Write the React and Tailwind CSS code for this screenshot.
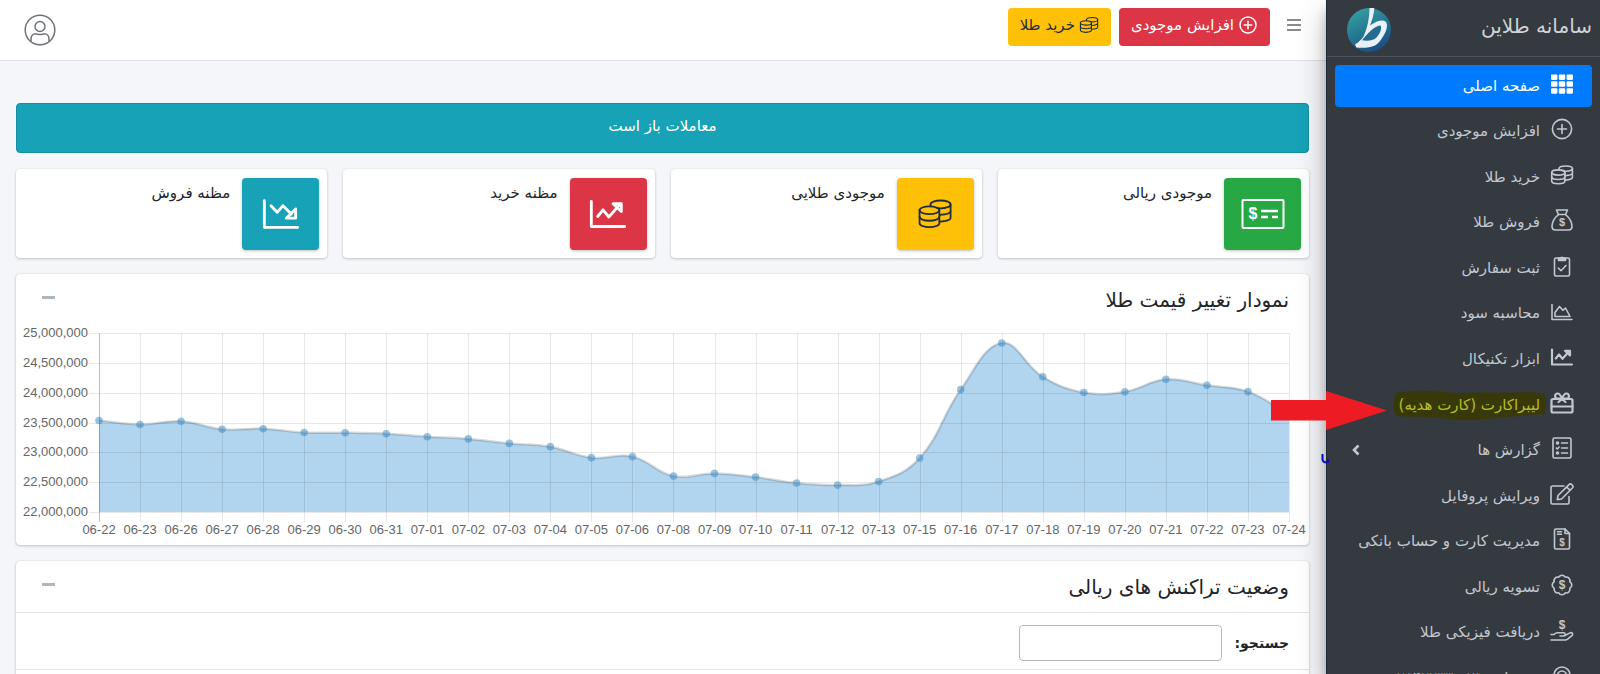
import React from 'react'
import { FaTh } from 'react-icons/fa'

const prices = [
  ['06-22', 23533], ['06-23', 23466], ['06-26', 23521], ['06-27', 23387], ['06-28', 23396],
  ['06-29', 23332], ['06-30', 23329], ['06-31', 23312], ['07-01', 23262], ['07-02', 23225],
  ['07-03', 23150], ['07-04', 23095], ['07-05', 22911], ['07-06', 22928], ['07-08', 22602],
  ['07-09', 22647], ['07-10', 22585], ['07-11', 22485], ['07-12', 22451], ['07-13', 22510],
  ['07-15', 22903], ['07-16', 24051], ['07-17', 24833], ['07-18', 24265], ['07-19', 24002],
  ['07-20', 24014], ['07-21', 24223], ['07-22', 24123], ['07-23', 24017], ['07-24', 23638]
]

const ticks = [25000, 24500, 24000, 23500, 23000, 22500, 22000]

function Icon({ size = 'size-6', width = 1.6, children }) {
  return (
    <svg
      viewBox="0 0 24 24"
      className={`${size} shrink-0`}
      fill="none"
      stroke="currentColor"
      strokeWidth={width}
      strokeLinecap="round"
      strokeLinejoin="round"
      aria-hidden="true"
    >
      {children}
    </svg>
  )
}

function Dollar({ x = 12, y = 16, size = 10 }) {
  return (
    <text
      x={x}
      y={y}
      fontSize={size}
      fontWeight="700"
      textAnchor="middle"
      fill="currentColor"
      stroke="none"
      fontFamily="Liberation Sans, sans-serif"
    >
      $
    </text>
  )
}

const PlusCircle = (p) => (
  <Icon {...p}>
    <circle cx="12" cy="12" r="9.6" />
    <path d="M12 7.5v9M7.5 12h9" />
  </Icon>
)

const Coins = (p) => (
  <Icon {...p}>
    <ellipse cx="8.3" cy="9.5" rx="6.6" ry="2.6" />
    <path d="M1.7 9.5v8.6c0 1.5 3 2.7 6.6 2.7s6.6-1.2 6.6-2.7V9.5" />
    <path d="M1.7 13.8c0 1.5 3 2.7 6.6 2.7s6.6-1.2 6.6-2.7" />
    <path d="M9 6.9V5.6c0-1.5 3-2.6 6.8-2.6s6.6 1.1 6.6 2.6-3 2.6-6.6 2.6c-1 0-2-.1-2.800-.3" />
    <path d="M22.4 5.6v9c0 1.100-2.500 2.200-7.200 2.500M22.400 10c0 1.200-2.500 2.300-7.200 2.600" />
  </Icon>
)

const MoneyBag = (p) => (
  <Icon {...p}>
    <path d="M8.5 6.5 6.5 2h11l-2 4.5z" />
    <path d="M8.5 6.5C5 9.5 2 14 2 18.300 2 20.600 3.500 22 5.600 22h12.800c2.100 0 3.600-1.400 3.600-3.700 0-4.300-3-8.800-6.500-11.800" />
    <Dollar y="18" size="11" />
  </Icon>
)

const Clipboard = (p) => (
  <Icon {...p}>
    <rect x="4.5" y="4" width="15" height="18" rx="1.5" />
    <path d="M8.5 6.5V4.300h2a1.600 1.600 0 0 1 3 0h2v2.200z" fill="currentColor" />
    <path d="m8.300 14 2.700 2.700 5-5.200" />
  </Icon>
)

const ChartArea = (p) => (
  <Icon {...p}>
    <path d="M2 4.500v15h20" />
    <path d="M5 16.500v-4L9.500 6.500l3.300 3.800 2.700-2.300 4.500 8.500z" />
  </Icon>
)

const ChartUp = (p) => (
  <Icon {...p}>
    <path d="M2 4.500v15h20" />
    <path d="m5.800 13.500 3.200-4 3.500 4.300 6-6.800" />
    <path d="M15 5.800h5v4.700z" />
  </Icon>
)

const ChartDown = (p) => (
  <Icon {...p}>
    <path d="M2 4v16h20" />
    <path d="m6 7 3.700 4 3.500-4 5 5" />
    <path d="M15.200 14.500h5.600V9z" />
  </Icon>
)

const Gift = (p) => (
  <Icon {...p}>
    <rect x="1.500" y="8" width="21" height="13.500" rx="1.500" />
    <path d="M1.500 15.500h21M12 8 8.500 11M12 8l3.500 3" />
    <path d="M12 7.500C10.500 4 9.300 2.500 7.600 2.500c-3.200 0-3.300 5-.6 5zM12 7.500c1.500-3.500 2.700-5 4.400-5 3.200 0 3.300 5 .6 5z" />
  </Icon>
)

const ListCheck = (p) => (
  <Icon {...p}>
    <rect x="3" y="2" width="18" height="20" rx="1.500" />
    <path d="M11.500 7h6M11.500 12h6M11.500 17h6" />
    <circle cx="7.500" cy="7" r="1" />
    <path d="m6.300 12 1 1 1.800-2" />
    <circle cx="7.500" cy="17" r="1" />
  </Icon>
)

const Pencil = (p) => (
  <Icon {...p}>
    <path d="M14 4H2.500A1.500 1.500 0 0 0 1 5.500v15A1.500 1.500 0 0 0 2.500 22h15a1.500 1.500 0 0 0 1.500-1.500v-6" />
    <path d="M8 13.500 19 2.600a2 2 0 0 1 2.800 0l.6.600a2 2 0 0 1 0 2.800L11.500 17 7.300 17.600zM16.700 5l3.400 3.400" />
  </Icon>
)

const FileDollar = (p) => (
  <Icon {...p}>
    <path d="M4.500 3.500A1.500 1.500 0 0 1 6 2h9l4.500 4.500v14A1.500 1.500 0 0 1 18 22H6a1.500 1.500 0 0 1-1.500-1.500z" />
    <path d="M7.500 4.800h4M7.500 7.300h4M15 2v4.500h4.500" />
    <Dollar y="18.500" />
  </Icon>
)

const Badge = (p) => (
  <Icon {...p}>
    <path d="M12 2.200c1.500 0 2.500.8 3.200 2 1.400-.4 2.700-.2 3.700.9 1 1 1.300 2.300.9 3.700 1.300.7 2 1.800 2 3.200s-.7 2.500-2 3.200c.4 1.400.1 2.700-.9 3.700s-2.300 1.300-3.700.9c-.7 1.300-1.800 2-3.200 2s-2.500-.7-3.200-2c-1.400.4-2.700.1-3.700-.9s-1.300-2.300-.9-3.700c-1.300-.7-2-1.800-2-3.200s.7-2.500 2-3.200c-.4-1.400-.1-2.700.9-3.700s2.300-1.300 3.700-.9c.7-1.200 1.700-2 3.200-2z" />
    <Dollar y="16" size="12" />
  </Icon>
)

const HandDollar = (p) => (
  <Icon {...p}>
    <Dollar y="10" size="12" />
    <path d="M1 15.500h3c1-1 2-1.700 3.500-1.700h6c2.300 0 2.300 3.200 0 3.200H10M14.500 16.800l5-2.700c2-1.200 4.300.6 2.700 2.300l-4.600 3.800c-.8.600-1.500.8-2.400.8H1" />
  </Icon>
)

const Support = (p) => (
  <Icon {...p}>
    <path d="M4 18v-7a8 8 0 0 1 16 0v7" />
    <path d="M7.500 18v-6.500a4.500 4.500 0 0 1 9 0V18" />
  </Icon>
)

const GridIcon = () => <FaTh className="size-[22px] shrink-0" />

const menu = [
  { label: 'صفحه اصلی', icon: GridIcon, active: true },
  { label: 'افزایش موجودی', icon: PlusCircle },
  { label: 'خرید طلا', icon: Coins },
  { label: 'فروش طلا', icon: MoneyBag },
  { label: 'ثبت سفارش', icon: Clipboard },
  { label: 'محاسبه سود', icon: ChartArea },
  { label: 'ابزار تکنیکال', icon: ChartUp, bold: true },
  { label: 'لیبراکارت (کارت هدیه)', icon: Gift, bold: true, marked: true },
  { label: 'گزارش ها', icon: ListCheck, children: true },
  { label: 'ویرایش پروفایل', icon: Pencil },
  { label: 'مدیریت کارت و حساب بانکی', icon: FileDollar },
  { label: 'تسویه ریالی', icon: Badge },
  { label: 'دریافت فیزیکی طلا', icon: HandDollar },
  { label: 'پشتیبانی ۰۲۱-۲۸۴۲۲۳۳', icon: Support }
]

function MenuItem({ item }) {
  const Glyph = item.icon
  return (
    <a
      href="#"
      className={`flex items-center gap-2 rounded px-4 text-[15px] ${
        item.active ? 'bg-[#007bff] text-white' : 'text-[#c2c7d0]'
      }`}
    >
      <span className="flex w-7 justify-center pb-1">
        <Glyph width={item.bold ? 2.2 : 1.6} />
      </span>
      {item.marked ? (
        <span className="relative py-1 text-[#b9bd2b]">
          <svg
            viewBox="0 0 146 30"
            preserveAspectRatio="none"
            className="absolute -inset-x-1.5 inset-y-0 h-full w-[calc(100%+12px)]"
            aria-hidden="true"
          >
            <path
              d="M3 3C20-1 40 1 60 3c25-1 50 0 70-1l14 2 2 8-2 12c-20 0-30 3-45 3-20 3-40 3-58 0-15-1-28 0-38-2-4-5-3-16 0-22z"
              fill="#373a08"
            />
          </svg>
          <span className="relative">{item.label}</span>
        </span>
      ) : (
        <span>{item.label}</span>
      )}
      {item.children && (
        <svg
          viewBox="0 0 10 12"
          className="mr-auto h-3 w-2.5"
          fill="none"
          stroke="currentColor"
          strokeWidth="2.600"
          aria-hidden="true"
        >
          <path d="M7.500 1.500 3 6l4.500 4.500" />
        </svg>
      )}
    </a>
  )
}

function Logo() {
  return (
    <svg viewBox="0 0 44 44" className="size-11" role="img" aria-label="طلاین">
      <defs>
        <linearGradient id="logo" x1="0.200" y1="0" x2="0.700" y2="1">
          <stop offset="0" stopColor="#38a0a3" />
          <stop offset="0.550" stopColor="#22748f" />
          <stop offset="1" stopColor="#1c4a83" />
        </linearGradient>
      </defs>
      <circle cx="22" cy="22" r="22" fill="url(#logo)" />
      <path
        d="M22.500 0h4.800c-.3 6-2 12-4.300 17.500 6-4.500 12.500-6.500 15.500-4 3 3 1 10-2.500 15-2.500 4-5 7.500-8 9-5 2.300-12 2.600-18.500 2L8 36.500c3-2 6-4.500 8.500-8C20 21 22.500 11 22.500 0z"
        fill="#eaf1f6"
      />
      <path d="M33.500 17.500c-5 0-12 6.500-18.500 14.800 6 1 11 .2 14-2.300 3.500-3.500 6.500-9.500 4.500-12.500z" fill="#226c90" />
    </svg>
  )
}

function Sidebar() {
  return (
    <aside className="relative z-10 flex w-[274px] shrink-0 flex-col border-l border-[#1d2736] bg-[#343a40] shadow-[0_14px_28px_rgba(0,0,0,0.25),0_10px_10px_rgba(0,0,0,0.22)]">
      <div className="flex h-[57px] shrink-0 items-end justify-between border-b border-[#4b545c] pr-2 pb-1 pl-5">
        <span className="pb-3 text-xl text-[#d0d3d7]">سامانه طلاین</span>
        <Logo />
      </div>
      <nav className="grid min-h-[650px] shrink-0 auto-rows-fr gap-1 p-2">
        {menu.map((item) => (
          <MenuItem key={item.label} item={item} />
        ))}
      </nav>
      <svg viewBox="0 0 116 40" className="absolute top-[391px] -left-14 w-[116px]" aria-hidden="true">
        <path d="M0 9h55V0l61 19.500L55 39V29.500H0z" fill="#ed1c24" />
      </svg>
      <svg viewBox="0 0 8 12" className="absolute top-[453px] -left-1.5 w-2" aria-hidden="true">
        <path d="M1.500 1v5.500C2 10 5 9.500 7 9V6" fill="none" stroke="#0b0bc4" strokeWidth="2" />
      </svg>
    </aside>
  )
}

function Topbar() {
  return (
    <header className="flex h-[61px] items-start justify-between border-b border-[#dee2e6] bg-white pt-2 pr-6 pl-6">
      <div className="flex items-start gap-2">
        <button type="button" aria-label="منو" className="ml-2 flex h-[34px] w-4 items-center justify-center text-[#666]">
          <svg viewBox="0 0 14 12" className="w-3.5" stroke="currentColor" strokeWidth="1.600" aria-hidden="true">
            <path d="M0 1h14M0 6h14M0 11h14" />
          </svg>
        </button>
        <button
          type="button"
          className="flex h-[38px] items-center gap-1 rounded bg-[#dc3545] px-3 pb-1 text-[15px] text-white"
        >
          <PlusCircle size="size-5" width={1.8} />
          افزایش موجودی
        </button>
        <button
          type="button"
          className="flex h-[38px] items-center gap-1 rounded bg-[#ffc107] px-3 pb-1 text-[15px] text-[#1f2d3d]"
        >
          <Coins size="size-5" width={1.3} />
          خرید طلا
        </button>
      </div>
      <button type="button" aria-label="حساب کاربری" className="mt-1.5 text-[#6f7378]">
        <svg viewBox="0 0 32 32" className="size-8" fill="none" stroke="currentColor" strokeWidth="1.500" aria-hidden="true">
          <circle cx="16" cy="16" r="14.800" />
          <circle cx="16" cy="12.500" r="5" />
          <path d="M7 27v-1.500c0-3.500 2-5.700 4.500-5.700 1.500 0 2.500.8 4.500.8s3-.8 4.500-.8c2.500 0 4.500 2.200 4.500 5.700V27" />
        </svg>
      </button>
    </header>
  )
}

function InfoBox({ title, tone, children }) {
  return (
    <div className="flex min-h-[89px] gap-3 rounded bg-white p-2 pt-[9px] shadow-[0_0_1px_rgba(0,0,0,0.13),0_1px_3px_rgba(0,0,0,0.2)]">
      <div
        className={`flex w-[77px] items-center justify-center rounded shadow-[0_1px_3px_rgba(0,0,0,0.25)] ${tone}`}
      >
        {children}
      </div>
      <span className="pt-1 text-[15px] text-[#212529]">{title}</span>
    </div>
  )
}

// Smoothed line: control points lean on the neighbours of each point
function splinePath(pts, tension = 0.4) {
  const ctrl = pts.map((p, i) => {
    const prev = pts[i - 1] || p
    const next = pts[i + 1] || p
    const d01 = Math.hypot(p.x - prev.x, p.y - prev.y)
    const d12 = Math.hypot(next.x - p.x, next.y - p.y)
    const total = d01 + d12 || 1
    const a = (tension * d01) / total
    const b = (tension * d12) / total
    return {
      inX: p.x - a * (next.x - prev.x),
      inY: p.y - a * (next.y - prev.y),
      outX: p.x + b * (next.x - prev.x),
      outY: p.y + b * (next.y - prev.y)
    }
  })
  return pts
    .map((p, i) =>
      i === 0
        ? `M${p.x} ${p.y}`
        : `C${ctrl[i - 1].outX} ${ctrl[i - 1].outY} ${ctrl[i].inX} ${ctrl[i].inY} ${p.x} ${p.y}`
    )
    .join(' ')
}

function PriceChart() {
  const left = 83
  const right = 1273
  const top = 7
  const bottom = 186
  const step = (right - left) / (prices.length - 1)
  const yOf = (v) => bottom - ((v - 22000) / 3000) * (bottom - top)
  const pts = prices.map(([, v], i) => ({ x: left + i * step, y: yOf(v) }))
  const line = splinePath(pts)

  return (
    <svg
      viewBox="0 0 1293 219"
      className="block w-full font-['Liberation_Sans',Arial,sans-serif]"
      direction="ltr"
      role="img"
      aria-label="نمودار تغییر قیمت طلا"
    >
      <path d={`${line} L${right} ${bottom} L${left} ${bottom}Z`} fill="#b1d5ef" />
      <path d={line} fill="none" stroke="#000" strokeOpacity="0.150" strokeWidth="2.500" />
      {ticks.map((t) => (
        <g key={t}>
          <path d={`M${left - 10} ${Math.round(yOf(t)) + 0.5}H${right}`} stroke="#000" strokeOpacity="0.090" />
          <text x={left - 11} y={yOf(t) + 4} textAnchor="end" fontSize="13" fill="#666">
            {(t * 1000).toLocaleString('en-US')}
          </text>
        </g>
      ))}
      {prices.map(([day], i) => (
        <g key={day}>
          <path
            d={`M${Math.round(pts[i].x) + 0.5} ${top}V${bottom + 10}`}
            stroke="#000"
            strokeOpacity={i === 0 ? 0.25 : 0.09}
          />
          <text x={pts[i].x} y={bottom + 22} textAnchor="middle" fontSize="13" fill="#666">
            {day}
          </text>
        </g>
      ))}
      {pts.map((p) => (
        <circle key={p.x} cx={p.x} cy={p.y} r="3.800" fill="#3688c4" fillOpacity="0.500" />
      ))}
    </svg>
  )
}

function Card({ title, divided, children }) {
  return (
    <section className="rounded bg-white shadow-[0_0_1px_rgba(0,0,0,0.2),0_1px_3px_rgba(0,0,0,0.2)]">
      <div
        className={`flex h-[52px] items-center justify-between pr-5 pl-6 ${
          divided ? 'border-b border-[#e3e5e8]' : ''
        }`}
      >
        <h3 className="text-xl text-[#212529]">{title}</h3>
        <button type="button" aria-label="بستن" className="flex h-6 w-4 items-start justify-center pt-2">
          <span className="h-[3px] w-[13px] bg-[#adb5bd]" />
        </button>
      </div>
      {children}
    </section>
  )
}

export default function App() {
  return (
    <div
      dir="rtl"
      className="flex h-screen overflow-hidden bg-[#f4f6f9] font-['DejaVu_Sans',sans-serif]"
    >
      <Sidebar />
      <div className="min-w-0 flex-1">
        <Topbar />
        <main className="space-y-4 pt-[42px] pr-[17px] pl-4">
          <div className="flex h-[50px] items-center justify-center rounded border border-[#148ea1] bg-[#17a2b8] pb-1 text-[15px] text-white">
            معاملات باز است
          </div>
          <div className="grid grid-cols-4 gap-4">
            <InfoBox title="موجودی ریالی" tone="bg-[#28a745] text-white">
              <svg viewBox="0 0 44 32" className="w-11" fill="none" stroke="currentColor" strokeWidth="2" aria-hidden="true">
                <rect x="1.500" y="2" width="41" height="28" rx="1" />
                <path d="M20 13h17M20 19h7M31 19h6" strokeWidth="2.500" />
                <Dollar x={12} y={21} size={16} />
              </svg>
            </InfoBox>
            <InfoBox title="موجودی طلایی" tone="bg-[#ffc107] text-[#1f2d3d]">
              <Coins size="size-9" width={1.2} />
            </InfoBox>
            <InfoBox title="مظنه خرید" tone="bg-[#dc3545] text-white">
              <ChartUp size="size-10" width={1.7} />
            </InfoBox>
            <InfoBox title="مظنه فروش" tone="bg-[#17a2b8] text-white">
              <ChartDown size="size-10" width={1.7} />
            </InfoBox>
          </div>
          <Card title="نمودار تغییر قیمت طلا">
            <PriceChart />
          </Card>
          <Card title="وضعیت تراکنش های ریالی" divided>
            <div className="flex items-center gap-3 border-b border-[#e3e5e8] px-5 pt-3 pb-2">
              <label htmlFor="search" className="text-sm font-bold text-[#212529]">
                جستجو:
              </label>
              <input
                id="search"
                type="search"
                className="h-9 w-[203px] rounded border border-[#b5babf] bg-white px-2 text-sm outline-none"
              />
            </div>
            <div className="h-40" />
          </Card>
        </main>
      </div>
    </div>
  )
}
